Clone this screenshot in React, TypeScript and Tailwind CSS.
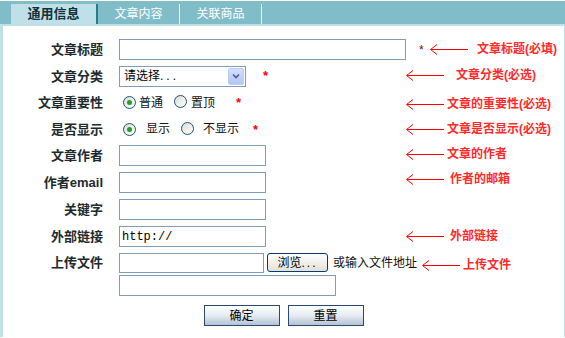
import React from "react";

const FONT = '"Liberation Sans", "Noto Sans CJK SC", sans-serif';

function Arrow() {
  return (
    <svg width="38" height="11" viewBox="0 0 38 11" shapeRendering="crispEdges">
      <line x1="0.5" y1="5.5" x2="38" y2="5.5" stroke="#ff0000" strokeWidth="1" />
      <line x1="0.5" y1="5.5" x2="7" y2="0.5" stroke="#ff0000" strokeWidth="1" shapeRendering="auto" />
      <line x1="0.5" y1="5.5" x2="7" y2="10.5" stroke="#ff0000" strokeWidth="1" shapeRendering="auto" />
    </svg>
  );
}

function Radio({ checked }: { checked?: boolean }) {
  return (
    <span className="inline-flex items-center justify-center w-[13px] h-[13px] rounded-full border border-[#1c5180] bg-gradient-to-br from-[#dcdcd4] to-white shrink-0">
      {checked && <span className="w-[5px] h-[5px] rounded-full bg-[#21a121]" />}
    </span>
  );
}

function Label({ children }: { children: React.ReactNode }) {
  return (
    <div className="w-[100px] text-right pr-0 font-bold text-[13px] text-[#1c2a2e] shrink-0 leading-none">
      {children}
    </div>
  );
}

function TextInput({ w, h = "h-[21px]", value }: { w: string; h?: string; value?: string }) {
  return (
    <div className={`${w} ${h} border border-[#7f9db9] bg-white flex items-center pl-[2px] shrink-0`}>
      {value && (
        <span className="text-[12px] text-black" style={{ fontFamily: '"Liberation Mono", monospace' }}>
          {value}
        </span>
      )}
    </div>
  );
}

const notes = [
  { x: 430, y: 49, tx: 477, t: "文章标题(必填)" },
  { x: 406, y: 75, tx: 456, t: "文章分类(必选)" },
  { x: 406, y: 104, tx: 447, t: "文章的重要性(必选)" },
  { x: 406, y: 129, tx: 447, t: "文章是否显示(必选)" },
  { x: 406, y: 154, tx: 447, t: "文章的作者" },
  { x: 406, y: 179, tx: 450, t: "作者的邮箱" },
  { x: 406, y: 236, tx: 450, t: "外部链接" },
  { x: 422, y: 265, tx: 463, t: "上传文件" },
];

export default function App() {
  return (
    <div className="w-[565px] h-[338px] bg-white relative overflow-hidden flex flex-col" style={{ fontFamily: FONT }}>
      <div className="h-px bg-white shrink-0" />
      <div className="h-[23px] bg-[#81bdc9] flex items-end pl-[11px] shrink-0">
        <div className="w-[87px] h-[20px] bg-[#bfe0e8] border-r-2 border-[#2c7a8c] flex items-center justify-center font-bold text-[13px] text-[#14303a] leading-none pb-[1px]">
          通用信息
        </div>
        <div className="w-[82px] h-[20px] border-r border-white flex items-center justify-center text-[12px] text-white leading-none pb-[1px]">
          文章内容
        </div>
        <div className="w-[82px] h-[20px] border-r border-white flex items-center justify-center text-[12px] text-white leading-none pb-[1px]">
          关联商品
        </div>
      </div>
      <div className="h-[2px] bg-[#bfe0e8] shrink-0" />
      <div className="h-[311px] border-l-[3px] border-r border-[#bfe0e8] flex flex-col pt-[10px] shrink-0">
        {/* 文章标题 */}
        <div className="h-[27px] flex items-center">
          <Label>文章标题</Label>
          <div className="ml-[16px] flex items-center">
            <TextInput w="w-[287px]" h="h-[21px]" />
            <span className="ml-[13px] text-[12px] text-[#8b0000]">*</span>
          </div>
        </div>
        {/* 文章分类 */}
        <div className="h-[26px] flex items-center">
          <Label>文章分类</Label>
          <div className="ml-[16px] flex items-center">
            <div className="w-[127px] h-[21px] border border-[#7f9db9] bg-white flex items-center justify-between pl-[4px] pr-px">
              <span className="text-[12px] text-black leading-none">
                请选择<span className="tracking-[3px]">...</span>
              </span>
              <span className="w-[16px] h-[17px] rounded-[2px] bg-gradient-to-b from-[#d2defc] to-[#b1c6f5] border border-[#bccdf7] flex items-center justify-center">
                <svg width="8" height="6" viewBox="0 0 8 6">
                  <path d="M1 1.5 L4 4.5 L7 1.5" stroke="#4d6185" strokeWidth="1.6" fill="none" />
                </svg>
              </span>
            </div>
            <span className="ml-[17px] text-[13px] text-[#ff0000] font-bold">*</span>
          </div>
        </div>
        {/* 文章重要性 */}
        <div className="h-[27px] flex items-center">
          <Label>文章重要性</Label>
          <div className="ml-[20px] flex items-center text-[12px] text-[#111] leading-none">
            <Radio checked />
            <span className="ml-[3px]">普通</span>
            <span className="ml-[11px]"><Radio /></span>
            <span className="ml-[4px]">置顶</span>
            <span className="ml-[21px] text-[13px] text-[#ff0000] font-bold">*</span>
          </div>
        </div>
        {/* 是否显示 */}
        <div className="h-[26px] flex items-center">
          <Label>是否显示</Label>
          <div className="ml-[20px] flex items-center text-[12px] text-[#111] leading-none">
            <Radio checked />
            <span className="ml-[10px]">显示</span>
            <span className="ml-[11px]"><Radio /></span>
            <span className="ml-[9px]">不显示</span>
            <span className="ml-[14px] text-[13px] text-[#ff0000] font-bold">*</span>
          </div>
        </div>
        {/* 文章作者 */}
        <div className="h-[26px] flex items-center">
          <Label>文章作者</Label>
          <div className="ml-[16px]">
            <TextInput w="w-[147px]" />
          </div>
        </div>
        {/* 作者email */}
        <div className="h-[28px] flex items-center">
          <Label>作者email</Label>
          <div className="ml-[16px]">
            <TextInput w="w-[147px]" />
          </div>
        </div>
        {/* 关键字 */}
        <div className="h-[27px] flex items-center">
          <Label>关键字</Label>
          <div className="ml-[16px]">
            <TextInput w="w-[147px]" />
          </div>
        </div>
        {/* 外部链接 */}
        <div className="h-[27px] flex items-center">
          <Label>外部链接</Label>
          <div className="ml-[16px]">
            <TextInput w="w-[147px]" value="http://" />
          </div>
        </div>
        {/* 上传文件 */}
        <div className="flex items-start">
          <div className="h-[25px] flex items-center">
            <Label>上传文件</Label>
          </div>
          <div className="ml-[16px] flex flex-col">
            <div className="h-[25px] flex items-center">
              <TextInput w="w-[145px]" h="h-[20px]" />
              <div className="ml-[3px] w-[61px] h-[19px] rounded-[3px] border border-[#003c74] bg-gradient-to-b from-white to-[#e3e0d6] flex items-center justify-center text-[12px] text-black leading-none">
                浏览<span className="tracking-[2px]">...</span>
              </div>
              <span className="ml-[5px] text-[12px] text-[#111] leading-none">或输入文件地址</span>
            </div>
            <TextInput w="w-[217px]" h="h-[21px]" />
          </div>
        </div>
        {/* buttons */}
        <div className="mt-[9px] flex justify-center gap-[8px]">
          <div className="w-[76px] h-[21px] border border-[#2b4a70] bg-gradient-to-b from-white via-[#e6ecf3] to-[#b4c2d3] flex items-center justify-center text-[12px] text-black leading-none">
            确定
          </div>
          <div className="w-[76px] h-[21px] border border-[#2b4a70] bg-gradient-to-b from-white via-[#e6ecf3] to-[#b4c2d3] flex items-center justify-center text-[12px] text-black leading-none">
            重置
          </div>
        </div>
      </div>

      {notes.map((n, i) => (
        <React.Fragment key={i}>
          <div className="absolute" style={{ left: n.x, top: n.y - 5 }}>
            <Arrow />
          </div>
          <div
            className="absolute text-[12px] font-bold text-[#ff2a2a] leading-[16px] whitespace-nowrap"
            style={{ left: n.tx, top: n.y - 8 }}
          >
            {n.t}
          </div>
        </React.Fragment>
      ))}
    </div>
  );
}
